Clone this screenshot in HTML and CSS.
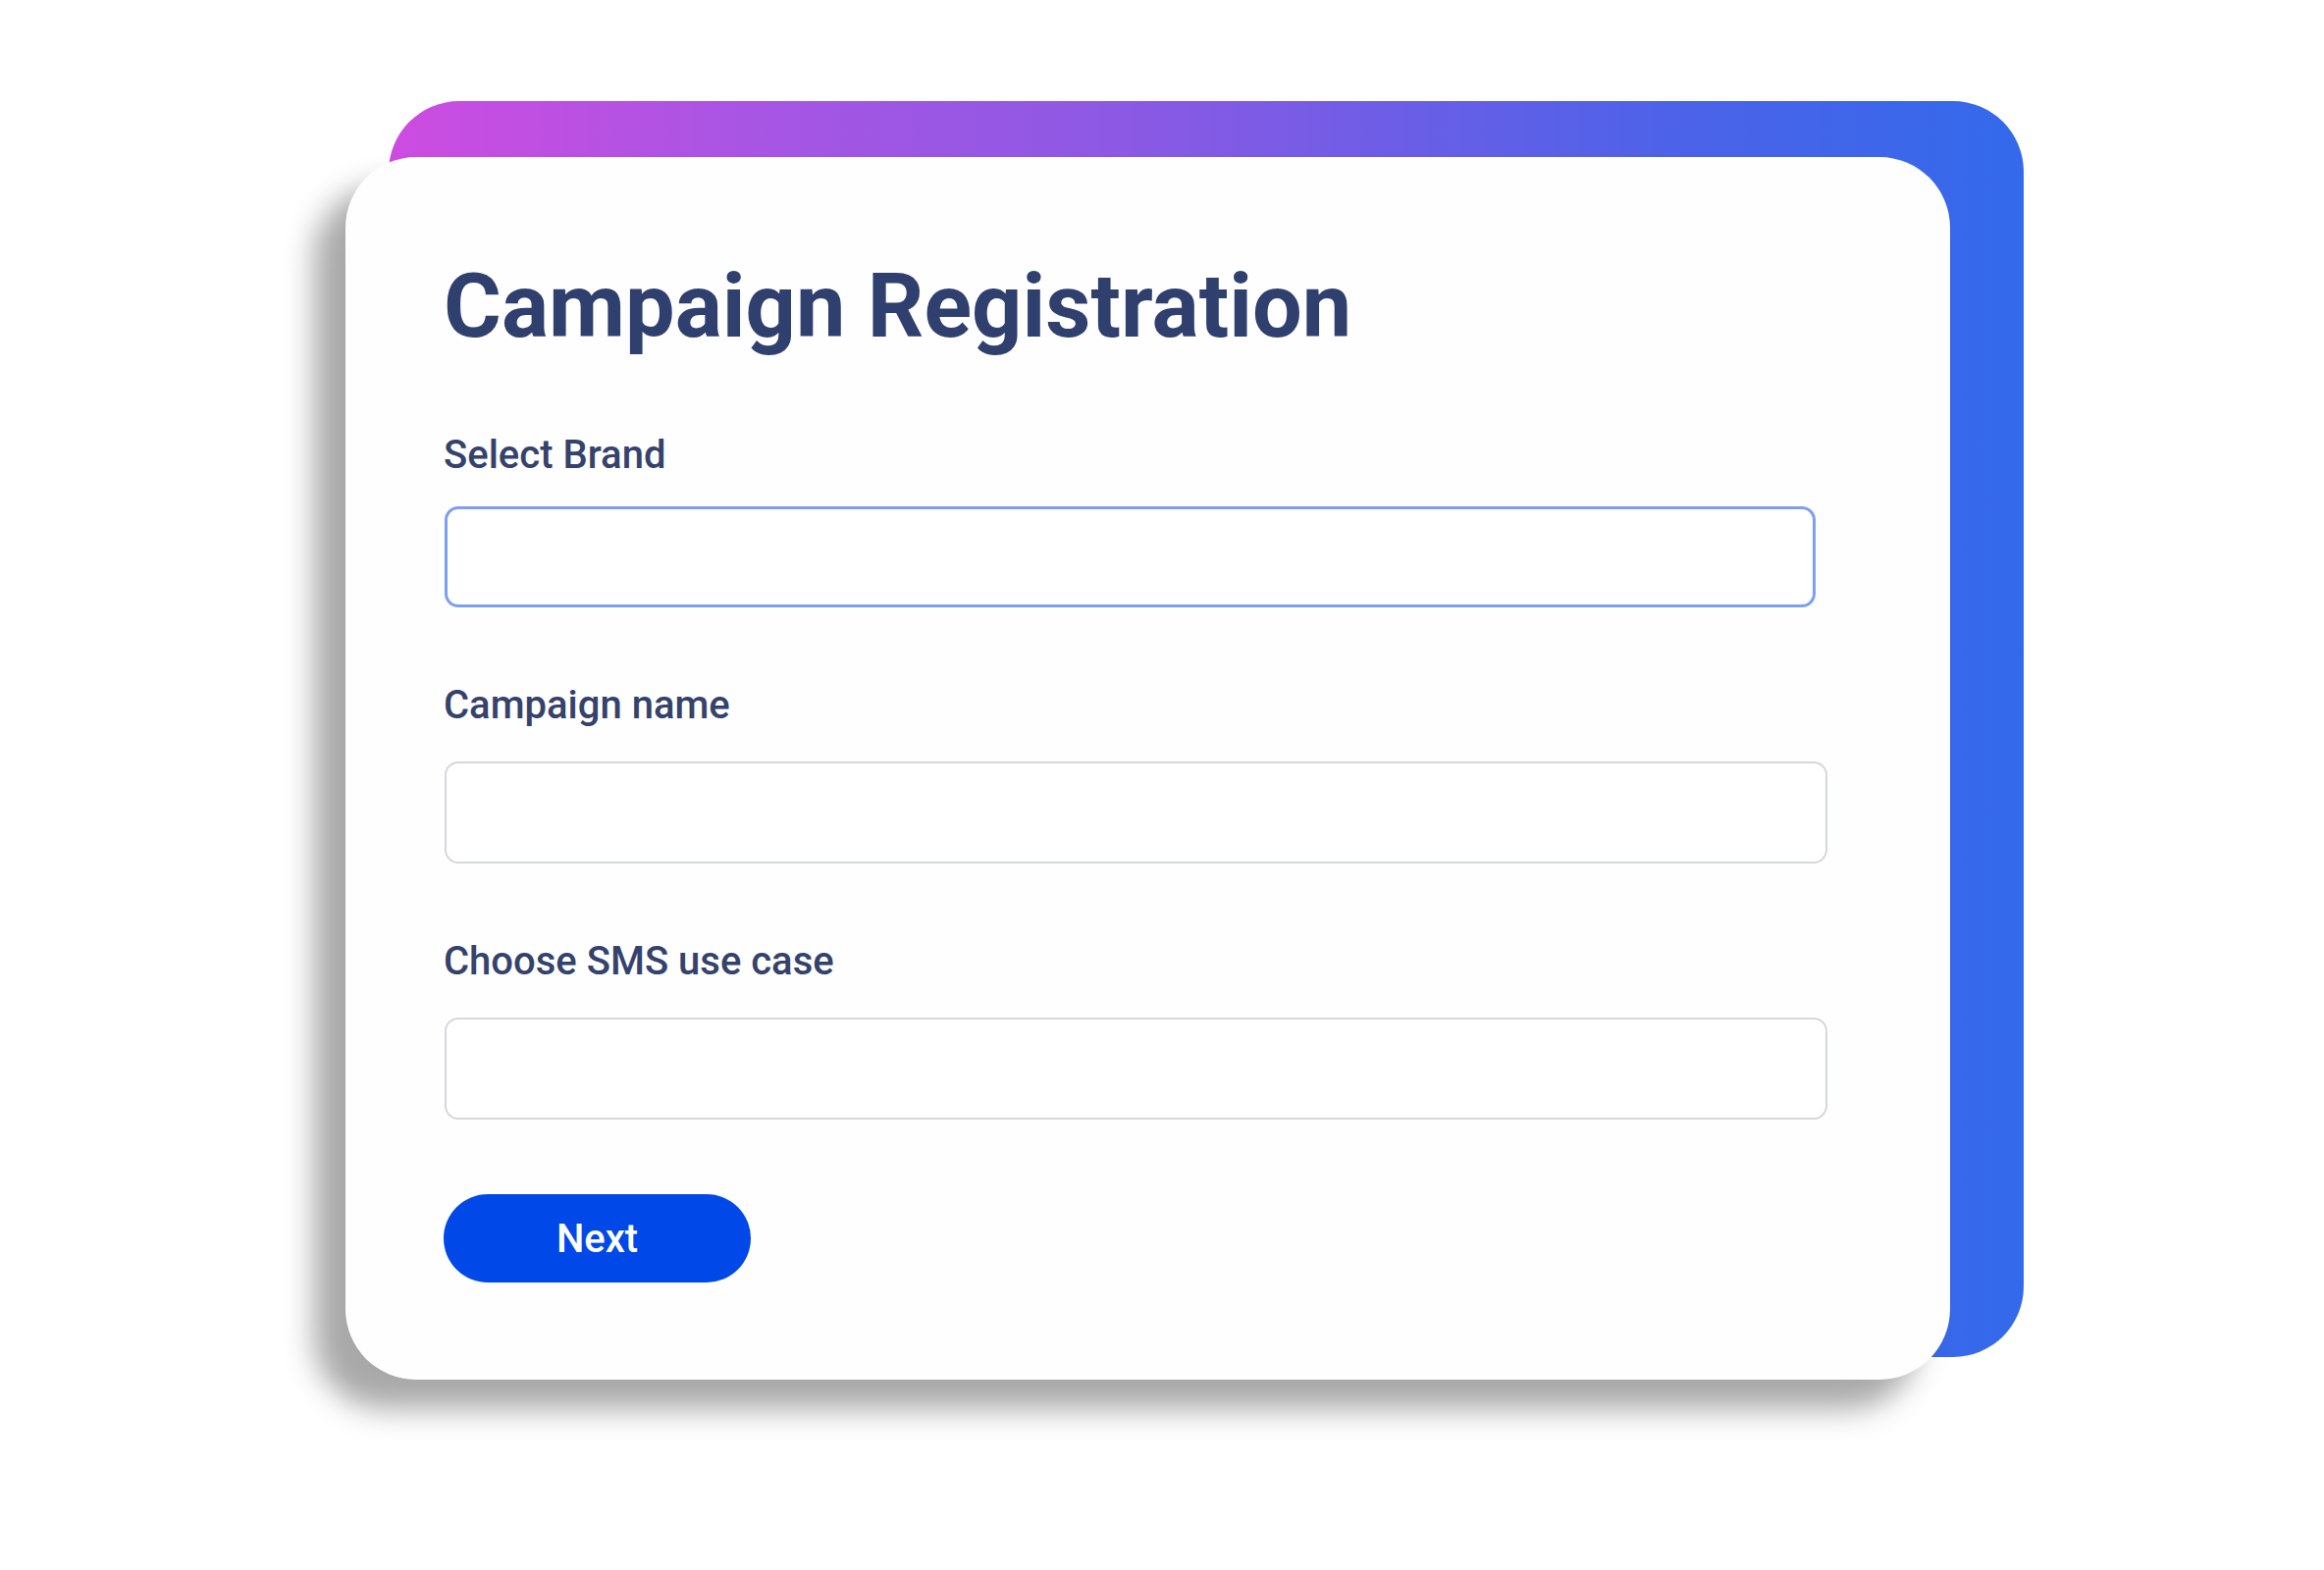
FILE: index.html
```html
<!DOCTYPE html>
<html lang="en">
<head>
<meta charset="utf-8">
<title>Campaign Registration</title>
<link rel="stylesheet" href="styles.css">
</head>
<body>
<div class="stage">
  <div class="frame">
    <div class="backdrop"></div>
    <form class="card">
      <h1 class="title">Campaign Registration</h1>
      <label class="label label-first">Select Brand</label>
      <div class="input input-focus"></div>
      <label class="label">Campaign name</label>
      <div class="input"></div>
      <label class="label">Choose SMS use case</label>
      <div class="input"></div>
      <button type="button" class="btn">Next</button>
    </form>
  </div>
</div>
</body>
</html>
```
FILE: styles.css
```css
html, body {
  margin: 0;
  padding: 0;
  background: #ffffff;
}
body {
  font-family: Roboto, "Noto Sans", "Liberation Sans", sans-serif;
  width: 2368px;
  height: 1600px;
  overflow: hidden;
}
.stage {
  padding: 103px 0 0 352px;
}
.frame {
  position: relative;
  width: 1710px;
  padding-top: 57px;
}
.backdrop {
  position: absolute;
  left: 44px;
  top: 0;
  width: 1666px;
  height: 1280px;
  border-radius: 72px;
  background: linear-gradient(90deg, #cd4ce1 0%, #a855e3 22%, #8a59e4 46%, #4d62e8 78%, #3369eb 100%);
}
.card {
  position: relative;
  z-index: 1;
  box-sizing: border-box;
  width: 1635px;
  height: 1246px;
  margin: 0;
  padding: 98px 0 0 100px;
  background: #fefefe;
  border-radius: 72px;
  box-shadow: -32px 30px 30px rgba(0, 0, 0, 0.34);
  display: flex;
  flex-direction: column;
  align-items: flex-start;
}
.title {
  margin: 0 0 73px 0;
  font-size: 90px;
  line-height: 1.213;
  font-weight: 700;
  color: #2f3f6e;
  letter-spacing: 0;
}
.label {
  display: block;
  margin: 76px 0 33px 0;
  font-size: 40px;
  line-height: 1.2;
  font-weight: 500;
  color: #34426c;
}
.label-first {
  margin-top: 0;
  margin-bottom: 28px;
}
.input {
  box-sizing: border-box;
  width: 1409px;
  height: 104px;
  margin-left: 1px;
  border: 2px solid #d6d8df;
  border-radius: 14px;
  background: #ffffff;
}
.input-focus {
  width: 1397px;
  height: 103px;
  border: 3px solid #7e9fee;
}
.btn {
  margin-top: 76px;
  width: 313px;
  height: 90px;
  border: none;
  border-radius: 45px;
  background: #0048e8;
  color: #ffffff;
  font-family: Roboto, "Noto Sans", "Liberation Sans", sans-serif;
  font-size: 40px;
  font-weight: 500;
  padding: 0;
  cursor: pointer;
}
```
